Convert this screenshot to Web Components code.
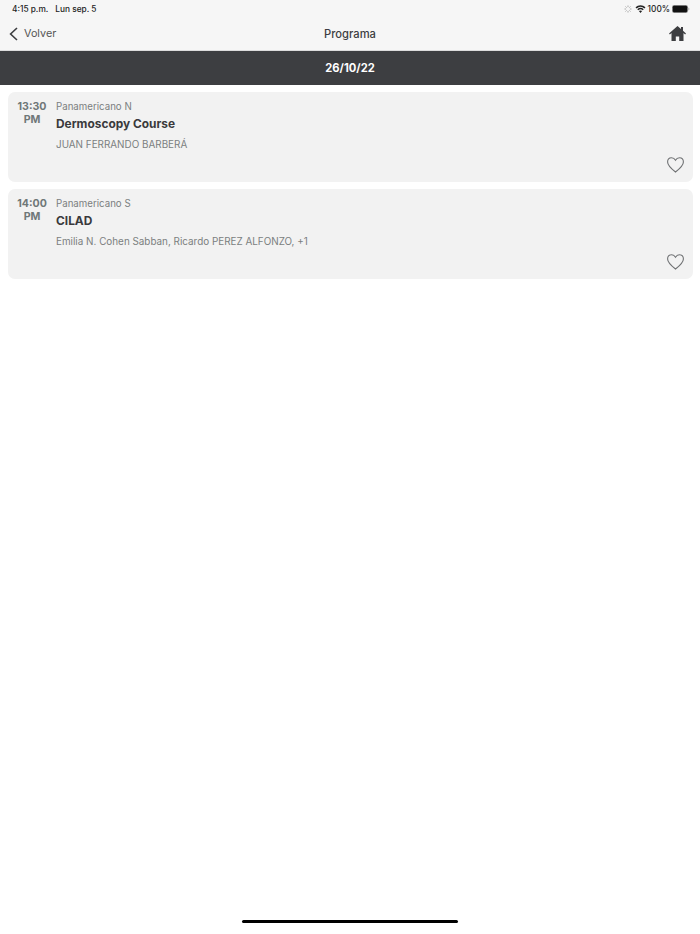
<!DOCTYPE html>
<html lang="es">
<head>
  <meta charset="UTF-8">
  <title>Programa</title>
  <style type="text/css">
    html, body { margin: 0; height: 100%; background: #fff; }
    body {
      width: 700px;
      height: 934px;
      overflow: hidden;
      display: flex;
      flex-direction: column;
      font-family: Inter, "Liberation Sans", sans-serif;
    }
  </style>
</head>
<body>
  <app-header title-text="Programa" back-text="Volver"></app-header>
  <date-bar>26/10/22</date-bar>
  <session-list>
    <session-card time="13:30" room="Panamericano N" name="Dermoscopy Course" people="JUAN FERRANDO BARBERÁ"></session-card>
    <session-card time="14:00" room="Panamericano S" name="CILAD" people="Emilia N. Cohen Sabban, Ricardo PEREZ ALFONZO, +1"></session-card>
  </session-list>
  <home-indicator></home-indicator>

  <script type="text/javascript">
    const HEADER = `
      <style type="text/css">
        :host { display: block; flex: none; height: 51px; box-sizing: border-box; background: #f6f6f6; color: #3d3e41; border-bottom: 1px solid #dcdcdc; }
        .status {
          height: 17px;
          padding: 0 10px 0 12px;
          display: flex;
          align-items: center;
          justify-content: space-between;
          font-size: 8.3px;
          font-weight: 500;
          color: #222;
        }
        .status .left { display: flex; gap: 7px; }
        .status .right { display: flex; align-items: center; gap: 2px; }
        .nav {
          position: relative;
          height: 33px;
          display: flex;
          align-items: center;
          justify-content: space-between;
          padding: 0 14px 0 9px;
          box-sizing: border-box;
        }
        .back { display: flex; align-items: center; gap: 6px; font-size: 10.8px; color: #555; }
        .title {
          position: absolute;
          left: 0;
          right: 0;
          text-align: center;
          font-size: 11.2px;
          font-weight: 500;
          pointer-events: none;
        }
        svg { display: block; }
      </style>
      <div class="status">
        <div class="left"><span>4:15 p.m.</span><span>Lun sep. 5</span></div>
        <div class="right">
          <svg width="8" height="8" viewBox="0 0 8 8" fill="none" stroke="#aaa" stroke-width="1">
            <path d="M4 .5v1.600M4 5.900v1.600M.5 4h1.600M5.900 4h1.600M1.500 1.500l1.100 1.100M5.400 5.400l1.100 1.100M1.500 6.500l1.100-1.100M5.400 2.600l1.100-1.100"/>
          </svg>
          <svg style="margin-left:1px" width="11" height="8" viewBox="0 0 11 8" fill="#222">
            <path d="M5.500 8 3.900 6.100a2.400 2.400 0 0 1 3.200 0zM3.200 5.300 2.300 4.200a4.900 4.900 0 0 1 6.400 0l-.9 1.100a3.500 3.500 0 0 0-4.600 0zM1.600 3.400.5 2.200a7.500 7.500 0 0 1 10 0L9.400 3.400a5.900 5.900 0 0 0-7.800 0z"/>
          </svg>
          <span>100%</span>
          <svg width="18" height="8" viewBox="0 0 18 8">
            <rect x=".3" y=".3" width="15.400" height="7.400" rx="2" fill="#111" stroke="#aaa" stroke-width=".6"/>
            <path d="M16.400 2.800c.7.100 1 .6 1 1.200s-.3 1.100-1 1.200z" fill="#aaa"/>
          </svg>
        </div>
      </div>
      <div class="nav">
        <div class="back">
          <svg width="9" height="14" viewBox="0 0 9 14" fill="none" stroke="#3d3e41" stroke-width="1.600">
            <path d="M8 1 1.600 7 8 13"/>
          </svg>
          <span id="back"></span>
        </div>
        <div class="title" id="title"></div>
        <svg width="17" height="15" viewBox="0 0 17 15" fill="#3d3e41">
          <path d="M8.500 0 0 7.400l.9 1L2.500 7v8h4.300v-4.600h3.400V15h4.300V7l1.600 1.400.9-1-3-2.600V1h-2v2.100z"/>
        </svg>
      </div>`

    customElements.define("app-header", class AppHeader extends HTMLElement {
      constructor() {
        super()
        this.attachShadow({ mode: "open" }).innerHTML = HEADER
      }

      connectedCallback() {
        this.shadowRoot.getElementById("title").textContent = this.getAttribute("title-text")
        this.shadowRoot.getElementById("back").textContent = this.getAttribute("back-text")
      }
    })

    customElements.define("date-bar", class DateBar extends HTMLElement {
      constructor() {
        super()
        this.attachShadow({ mode: "open" }).innerHTML = `
          <style type="text/css">
            :host {
              display: flex;
              flex: none;
              height: 34px;
              padding-bottom: 1px;
              box-sizing: border-box;
              align-items: center;
              justify-content: center;
              background: #3d3e41;
              color: #fff;
              font-size: 11.2px;
              font-weight: 700;
            }
          </style>
          <slot></slot>`
      }
    })

    customElements.define("session-list", class SessionList extends HTMLElement {
      constructor() {
        super()
        this.attachShadow({ mode: "open" }).innerHTML = `
          <style type="text/css">
            :host {
              display: flex;
              flex-direction: column;
              flex: 1;
              gap: 7px;
              padding: 7px 7px 0 8px;
            }
          </style>
          <slot></slot>`
      }
    })

    const CARD = `
      <style type="text/css">
        :host {
          display: grid;
          grid-template-columns: 48px 1fr;
          height: 90px;
          box-sizing: border-box;
          position: relative;
          background: #f2f2f2;
          border-radius: 7px;
        }
        .time {
          padding-top: 8px;
          text-align: center;
          font-size: 10.6px;
          font-weight: 700;
          line-height: 13px;
          color: #6f7778;
        }
        .body { padding-top: 8px; }
        .room { font-size: 9.7px; line-height: 13px; color: #7b7f80; }
        .name { margin-top: 3px; font-size: 11.9px; font-weight: 700; line-height: 15px; color: #3a3a3c; }
        .people { margin-top: 7px; font-size: 9.9px; line-height: 13px; color: #7b7f80; }
        svg { position: absolute; right: 9px; bottom: 9px; display: block; }
      </style>
      <div class="time"><span id="time"></span><br>PM</div>
      <div class="body">
        <div class="room" id="room"></div>
        <div class="name" id="name"></div>
        <div class="people" id="people"></div>
      </div>
      <svg width="17" height="16" viewBox="0 0 17 16" fill="none" stroke="#6f7173" stroke-width="1.100">
        <path d="M8.500 15C4 11.400.6 8.400.6 4.900.6 2.400 2.300.7 4.500.7c1.700 0 3.100.9 4 2.500.9-1.600 2.300-2.500 4-2.500 2.200 0 3.900 1.700 3.900 4.200 0 3.500-3.400 6.500-7.900 10.100z"/>
      </svg>`

    customElements.define("session-card", class SessionCard extends HTMLElement {
      constructor() {
        super()
        this.attachShadow({ mode: "open" }).innerHTML = CARD
      }

      connectedCallback() {
        ["time", "room", "name", "people"].forEach(key => {
          this.shadowRoot.getElementById(key).textContent = this.getAttribute(key)
        })
      }
    })

    customElements.define("home-indicator", class HomeIndicator extends HTMLElement {
      constructor() {
        super()
        this.attachShadow({ mode: "open" }).innerHTML = `
          <style type="text/css">
            :host { display: flex; flex: none; height: 14px; justify-content: center; }
            div { width: 216px; height: 3px; border-radius: 2px; background: #000; }
          </style>
          <div></div>`
      }
    })
  </script>
</body>
</html>
